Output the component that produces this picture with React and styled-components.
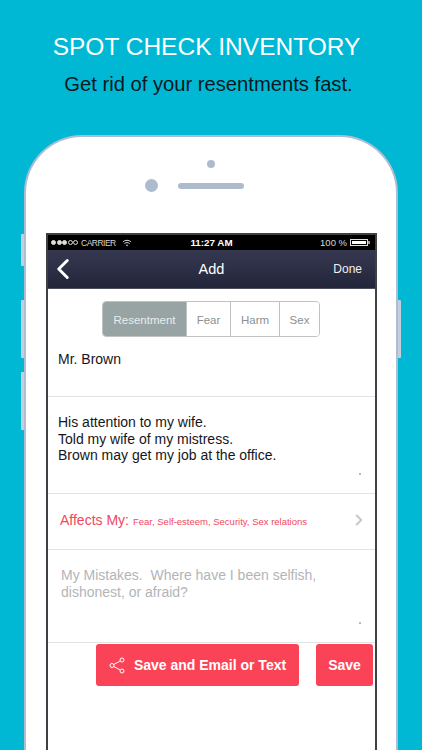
import React from 'react'
import styled, { createGlobalStyle } from 'styled-components'
import { ChevronLeft, ChevronRight } from 'lucide-react'

const GlobalStyle = createGlobalStyle`
  html, body {
    margin: 0;
    padding: 0;
    background: #00b8d4;
    overflow: hidden;
  }
  * { box-sizing: border-box; }
`

const Page = styled.div`
  width: 422px;
  height: 750px;
  overflow: hidden;
  background: #00b8d4;
  font-family: "Liberation Sans", Arial, sans-serif;
  display: flex;
  flex-direction: column;
  align-items: center;
`
const Title = styled.h1`
  margin: 32px 9px 0 0;
  height: 30px;
  font-size: 24.5px;
  line-height: 30px;
  font-weight: 400;
  color: #fff;
  white-space: nowrap;
`
const Subtitle = styled.h2`
  margin: 9px 5px 0 0;
  height: 26px;
  font-size: 20.2px;
  line-height: 26px;
  font-weight: 400;
  color: #08181e;
  white-space: nowrap;
`
const PhoneWrap = styled.div`
  position: relative;
  margin-top: 38px;
  width: 374px;
  flex: 1;
`
const SideButton = styled.span`
  position: absolute;
  top: ${p => p.$top}px;
  ${p => (p.$right ? 'right: -3px;' : 'left: -3px;')}
  width: 4px;
  height: ${p => p.$height}px;
  background: #c3cede;
  border-radius: 1px;
`
const Phone = styled.div`
  position: relative;
  height: 100%;
  padding: 0 19px 0 20px;
  background: #fff;
  border: 2px solid #aebdd2;
  border-bottom: none;
  border-radius: 58px 58px 0 0;
`
const Speaker = styled.div`
  height: 96px;
  display: grid;
  grid-template-columns: 13px 66px;
  column-gap: 20px;
  row-gap: 11px;
  justify-content: center;
  align-items: center;
  align-content: start;
  padding: 23px 35px 0 0;
`
const Sensor = styled.span`
  grid-column: 2;
  justify-self: center;
  width: 8px;
  height: 8px;
  border-radius: 50%;
  background: #aebbcf;
`
const Camera = styled.span`
  grid-column: 1;
  width: 13px;
  height: 13px;
  border-radius: 50%;
  background: #aebbcf;
`
const Earpiece = styled.span`
  grid-column: 2;
  height: 6px;
  border-radius: 3px;
  background: #aebbcf;
`
const Screen = styled.div`
  width: 331px;
  height: 530px;
  border: 2px solid #3d4044;
  border-bottom: none;
  background: #fff;
  display: flex;
  flex-direction: column;
`
const StatusBar = styled.div`
  height: 15px;
  background: #000;
  color: #d8d8d8;
  display: grid;
  grid-template-columns: 1fr auto 1fr;
  align-items: center;
  padding: 0 5px;
  font-size: 8.5px;
`
const StatusLeft = styled.div`
  display: flex;
  align-items: center;
  gap: 3px;
  margin-left: -2px;
  letter-spacing: -0.5px;
`
const WifiSlot = styled.span`
  display: flex;
  margin-left: 3px;
`
const Dots = styled.span`
  display: flex;
  gap: 0.5px;
`
const Dot = styled.i`
  display: block;
  width: 5px;
  height: 5px;
  border-radius: 50%;
  border: 0.7px solid #ddd;
  background: ${p => (p.$on ? '#ddd' : 'transparent')};
`
const Clock = styled.span`
  font-weight: 700;
  color: #fff;
  font-size: 9.8px;
`
const StatusRight = styled.div`
  display: flex;
  justify-content: flex-end;
  align-items: center;
  gap: 3px;
  font-size: 9.5px;
`
const NavBar = styled.div`
  height: 39px;
  background: linear-gradient(#353850, #23263a);
  border-bottom: 1px solid #4b4e5c;
  color: #fff;
  display: grid;
  grid-template-columns: 1fr auto 1fr;
  align-items: center;
  padding: 0 13px;
`
const BackIcon = styled(ChevronLeft)`
  margin-left: -15px;
`
const NavTitle = styled.span`
  font-size: 14.5px;
`
const NavDone = styled.span`
  justify-self: end;
  font-size: 12px;
  color: #f0f0f0;
`
const Segments = styled.div`
  align-self: center;
  margin: 12px 0 0 -1px;
  display: flex;
  height: 36px;
  border: 1px solid #bfc3c4;
  border-radius: 4px;
  overflow: hidden;
`
const Segment = styled.div`
  width: ${p => p.$width}px;
  display: flex;
  align-items: center;
  justify-content: center;
  padding-top: 1px;
  font-size: 11.5px;
  color: ${p => (p.$active ? '#e8ecec' : '#8c9090')};
  background: ${p => (p.$active ? '#98a4a4' : '#fff')};
  & + & {
    border-left: 1px solid #bfc3c4;
  }
`
const Field = styled.div`
  position: relative;
  height: ${p => p.$height}px;
  padding: ${p => p.$top}px 14px 0 ${p => (p.$muted ? 13 : 10)}px;
  border-bottom: 1px solid #e2e3e5;
  font-size: 14px;
  line-height: 16.5px;
  color: ${p => (p.$muted ? '#b4b4b8' : '#16161a')};
`
const Line = styled.div`
  white-space: nowrap;
`
const Speck = styled.span`
  position: absolute;
  right: 14px;
  bottom: 18px;
  width: 2px;
  height: 2px;
  background: #bbb;
`
const AffectsRow = styled.div`
  height: 56px;
  padding: 0 7px 3px 12px;
  border-bottom: 1px solid #e2e3e5;
  display: flex;
  align-items: center;
  color: #f0485c;
  white-space: nowrap;
`
const AffectsLabel = styled.span`
  font-size: 14px;
  margin-right: 4px;
`
const AffectsText = styled.span`
  flex: 1;
  font-size: 9.5px;
  padding-top: 2px;
`
const Actions = styled.div`
  margin-top: 1px;
  padding: 0 2px 0 48px;
  display: flex;
  justify-content: space-between;
`
const ActionButton = styled.button`
  height: 42px;
  width: ${p => p.$width}px;
  border: none;
  border-radius: 3px;
  background: #fb4358;
  color: #fff;
  font-family: inherit;
  font-size: 14px;
  font-weight: 700;
  display: flex;
  align-items: center;
  justify-content: center;
  gap: 9px;
  padding: 0;
`

const WifiIcon = () => (
  <svg width="10" height="8" viewBox="0 0 11 8" fill="none" stroke="#ddd" strokeWidth="1.1">
    <path d="M1 2.8C3.6.5 7.4.5 10 2.8" />
    <path d="M2.6 4.6c1.7-1.4 4.1-1.4 5.8 0" />
    <path d="M5.5 7.6 4.2 6.2c.8-.5 1.8-.5 2.6 0z" fill="#ddd" stroke="none" />
  </svg>
)

const BatteryIcon = () => (
  <svg width="20" height="7" viewBox="0 0 20 7">
    <rect x="0.5" y="0.5" width="17" height="6" fill="none" stroke="#ddd" />
    <rect x="2" y="2" width="14" height="3" fill="#fff" />
    <rect x="18.3" y="2" width="1.4" height="3" fill="#ddd" />
  </svg>
)

const ShareIcon = () => (
  <svg width="16" height="17" viewBox="0 0 16 17" fill="none" stroke="#fff" strokeWidth="1">
    <circle cx="13" cy="3" r="2" />
    <circle cx="3" cy="8.5" r="2" />
    <circle cx="13" cy="14" r="2" />
    <path d="M11.2 4 4.8 7.5M4.8 9.5l6.4 3.5" />
  </svg>
)

const segments = [
  { label: 'Resentment', width: 83, active: true },
  { label: 'Fear', width: 44 },
  { label: 'Harm', width: 49 },
  { label: 'Sex', width: 40 },
]

const App = () => {
  return (
    <Page>
      <GlobalStyle />
      <Title>SPOT CHECK INVENTORY</Title>
      <Subtitle>Get rid of your resentments fast.</Subtitle>
      <PhoneWrap>
        <SideButton $top={99} $height={32} />
        <SideButton $top={165} $height={58} />
        <SideButton $top={237} $height={58} />
        <SideButton $right $top={165} $height={58} />
        <Phone>
          <Speaker>
            <Sensor />
            <Camera />
            <Earpiece />
          </Speaker>
          <Screen>
            <StatusBar>
              <StatusLeft>
                <Dots>
                  <Dot $on />
                  <Dot $on />
                  <Dot $on />
                  <Dot />
                  <Dot />
                </Dots>
                CARRIER
                <WifiSlot>
                  <WifiIcon />
                </WifiSlot>
              </StatusLeft>
              <Clock>11:27 AM</Clock>
              <StatusRight>
                100 %
                <BatteryIcon />
              </StatusRight>
            </StatusBar>
            <NavBar>
              <BackIcon size={34} color="#fff" strokeWidth={2.1} />
              <NavTitle>Add</NavTitle>
              <NavDone>Done</NavDone>
            </NavBar>
            <Segments>
              {segments.map(s => (
                <Segment key={s.label} $width={s.width} $active={s.active}>
                  {s.label}
                </Segment>
              ))}
            </Segments>
            <Field $height={60} $top={14}>
              <Line>Mr. Brown</Line>
            </Field>
            <Field $height={97} $top={17}>
              <Line>His attention to my wife.</Line>
              <Line>Told my wife of my mistress.</Line>
              <Line>Brown may get my job at the office.</Line>
              <Speck />
            </Field>
            <AffectsRow>
              <AffectsLabel>Affects My:</AffectsLabel>
              <AffectsText>Fear, Self-esteem, Security, Sex relations</AffectsText>
              <ChevronRight size={18} color="#c8c8cc" strokeWidth={2.6} />
            </AffectsRow>
            <Field $height={93} $top={17} $muted>
              <Line>My Mistakes.&nbsp; Where have I been selfish,</Line>
              <Line>dishonest, or afraid?</Line>
              <Speck />
            </Field>
            <Actions>
              <ActionButton $width={203}>
                <ShareIcon />
                Save and Email or Text
              </ActionButton>
              <ActionButton $width={57}>Save</ActionButton>
            </Actions>
          </Screen>
        </Phone>
      </PhoneWrap>
    </Page>
  )
}

export default App
